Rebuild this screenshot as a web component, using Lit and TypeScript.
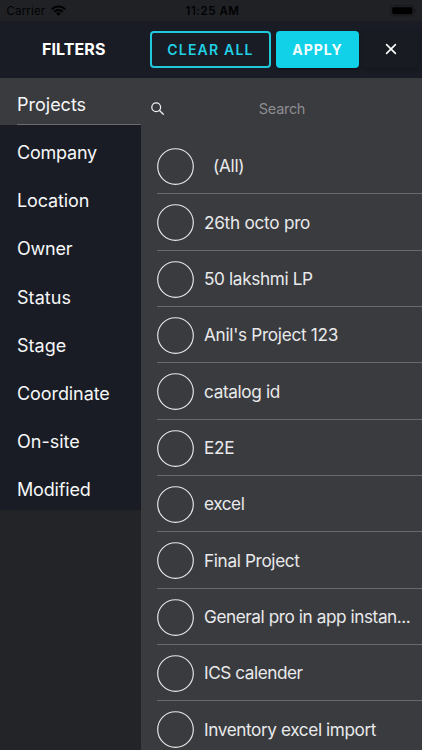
import { LitElement, html, css } from "lit";
import { customElement, property, state } from "lit/decorators.js";
import { classMap } from "lit/directives/class-map.js";

@customElement("status-bar")
class StatusBar extends LitElement {
  static styles = css`
    :host {
      display: grid;
      grid-template-columns: 1fr auto 1fr;
      height: 21px;
      box-sizing: border-box;
      padding: 0 6px;
      background: #202125;
      color: #020203;
      font-size: 11.5px;
      line-height: 22px;
    }
    .left { display: flex; gap: 6px; letter-spacing: 0.15px; padding-left: 0.5px; }
    .wifi { width: 15px; height: 11px; margin-top: 5px; }
    .time { font-weight: 600; letter-spacing: 0.55px; padding-left: 3px; }
    .battery { width: 27px; height: 12px; justify-self: end; margin-top: 5px; margin-right: -1px; }
  `;
  render() {
    return html`
      <div class="left">
        <span>Carrier</span>
        <svg class="wifi" viewBox="0 0 15 11" fill="none" stroke="currentColor" stroke-width="2">
          <path d="M0.8 4.2a9.5 9.5 0 0 1 13.4 0" />
          <path d="M3.2 6.8a6 6 0 0 1 8.6 0" />
          <path d="M7.5 10.8 5.1 8.5a3.5 3.5 0 0 1 4.8 0z" fill="currentColor" stroke="none" />
        </svg>
      </div>
      <span class="time">11:25 AM</span>
      <svg class="battery" viewBox="0 0 27 12">
        <rect x="0.6" y="0.6" width="23.4" height="10.2" rx="3" fill="none" stroke="#17181b" />
        <rect x="2.2" y="2.2" width="20.2" height="7" rx="1.4" fill="#000" />
        <path d="M25 4v3.6q1.4-.6 1.4-1.8T25 4z" fill="#15161a" />
      </svg>
    `;
  }
}

@customElement("filter-header")
class FilterHeader extends LitElement {
  static styles = css`
    :host {
      display: flex;
      align-items: flex-start;
      height: 57px;
      box-sizing: border-box;
      padding: 10px 3px 0 0;
      background: #191c24;
    }
    .title {
      width: 150px;
      box-sizing: border-box;
      padding-left: 42px;
      color: #fff;
      font-size: 16px;
      font-weight: 650;
      line-height: 37px;
      letter-spacing: 0.1px;
    }
    .button {
      display: flex;
      align-items: center;
      justify-content: center;
      box-sizing: border-box;
      height: 37px;
      margin: 0;
      padding: 0 0 0 1px;
      border: 0;
      border-radius: 4px;
      font: inherit;
      font-size: 14px;
      font-weight: 600;
      letter-spacing: 1.2px;
    }
    .clear {
      width: 121px;
      padding-right: 1px;
      border: 2px solid #20c8dc;
      background: transparent;
      color: #20d0e4;
    }
    .apply {
      width: 83px;
      margin-left: 4.5px;
      background: #10d1e8;
      color: #f4feff;
      font-weight: 700;
      letter-spacing: 1px;
      box-shadow: 0 2px 3px rgba(0, 0, 0, 0.3);
    }
    .close {
      width: 55px;
      padding: 0 1px 1px 0;
      margin-left: 5px;
      background: #191b22;
      color: #fff;
      box-shadow: 0 1px 4px rgba(0, 0, 0, 0.28);
    }
    .cross { width: 12px; height: 12px; }
  `;
  render() {
    return html`
      <div class="title">FILTERS</div>
      <button class="button clear">CLEAR ALL</button>
      <button class="button apply">APPLY</button>
      <button class="button close" aria-label="Close">
        <svg class="cross" viewBox="0 0 12 12" fill="none" stroke="currentColor" stroke-width="1.6" stroke-linecap="round">
          <path d="M1.6 1.6l8.8 8.8M10.4 1.6l-8.8 8.8" />
        </svg>
      </button>
    `;
  }
}

@customElement("category-list")
class CategoryList extends LitElement {
  @property({ attribute: false }) items: [string, number][] = [];
  @state() private selected = 0;

  static styles = css`
    :host { display: block; background: #232428; }
    .item {
      height: 48.18px;
      box-sizing: border-box;
      padding-left: 17px;
      background: #191c24;
      color: #f6f7f8;
      font-size: 18px;
      line-height: 55.6px;
      cursor: pointer;
    }
    .label {
      height: 100%;
      box-sizing: border-box;
      border-bottom: 1px solid #1b1c22;
      white-space: nowrap;
    }
    .item.selected { background: #3a3b3f; height: 47px; line-height: 53.6px; }
    .item.selected .label { border-bottom-color: #69696c; }
  `;
  render() {
    return this.items.map(
      ([text, tracking], i) => html`
        <div class=${classMap({ item: true, selected: i === this.selected })} @click=${() => (this.selected = i)}>
          <div class="label" style="letter-spacing:${tracking}px">${text}</div>
        </div>
      `
    );
  }
}

@customElement("option-list")
class OptionList extends LitElement {
  @property({ attribute: false }) items: [string, number][] = [];

  static styles = css`
    :host { display: block; background: #3a3b3f; overflow: hidden; }
    .search {
      display: flex;
      align-items: center;
      height: 60px;
      box-sizing: border-box;
      padding: 0 0 0 10px;
    }
    .glass { width: 13px; height: 13px; flex: none; }
    .placeholder {
      flex: 1;
      text-align: center;
      color: #8c8d90;
      font-size: 14.5px;
      letter-spacing: -0.3px;
      padding-right: 22px;
    }
    .row {
      display: flex;
      align-items: center;
      height: 56.33px;
      box-sizing: border-box;
      margin-left: 16px;
      border-bottom: 1px solid #68696c;
    }
    .circle { width: 37px; height: 37px; flex: none; margin-top: 2px; }
    .text {
      margin: 1.6px 0 0 10px;
      color: #e9eaeb;
      font-size: 17.2px;
      line-height: 24px;
      white-space: nowrap;
    }
    .all .text { margin-left: 19px; }
  `;
  render() {
    return html`
      <div class="search">
        <svg class="glass" viewBox="0 0 13 13" fill="none" stroke="#f2f2f3" stroke-width="1.25" stroke-linecap="round">
          <circle cx="5.2" cy="5.2" r="4.4" />
          <path d="M8.5 8.5l3.8 3.8" />
        </svg>
        <span class="placeholder">Search</span>
      </div>
      ${this.items.map(
        ([text, tracking], i) => html`
          <div class=${classMap({ row: true, all: i === 0 })}>
            <svg class="circle" viewBox="0 0 37 37">
              <circle cx="18.5" cy="18.5" r="17.8" fill="none" stroke="#e8e8e9" stroke-width="1.15" />
            </svg>
            <span class="text" style="letter-spacing:${tracking}px">${text}</span>
          </div>
        `
      )}
    `;
  }
}

@customElement("app-root")
class AppRoot extends LitElement {
  static styles = css`
    :host {
      display: flex;
      flex-direction: column;
      width: 100%;
      height: 100vh;
      overflow: hidden;
      background: #232428;
      font-family: Inter, "Liberation Sans", sans-serif;
    }
    .body { flex: 1; min-height: 0; display: grid; grid-template-columns: 141px 1fr; }
    option-list { min-height: 0; }
  `;

  private categories: [string, number][] = [
    ["Projects", 0], ["Company", -0.22], ["Location", -0.12], ["Owner", -0.2], ["Status", 0.06],
    ["Stage", 0], ["Coordinate", -0.08], ["On-site", 0], ["Modified", -0.16],
  ];
  private options: [string, number][] = [
    ["(All)", -0.3], ["26th octo pro", -0.26], ["50 lakshmi LP", -0.36], ["Anil's Project 123", -0.3],
    ["catalog id", -0.36], ["E2E", -0.3], ["excel", -0.45], ["Final Project", -0.36],
    ["General pro in app instan...", -0.43], ["ICS calender", -0.45], ["Inventory excel import", -0.4],
  ];

  render() {
    return html`
      <status-bar></status-bar>
      <filter-header></filter-header>
      <div class="body">
        <category-list .items=${this.categories}></category-list>
        <option-list .items=${this.options}></option-list>
      </div>
    `;
  }
}
